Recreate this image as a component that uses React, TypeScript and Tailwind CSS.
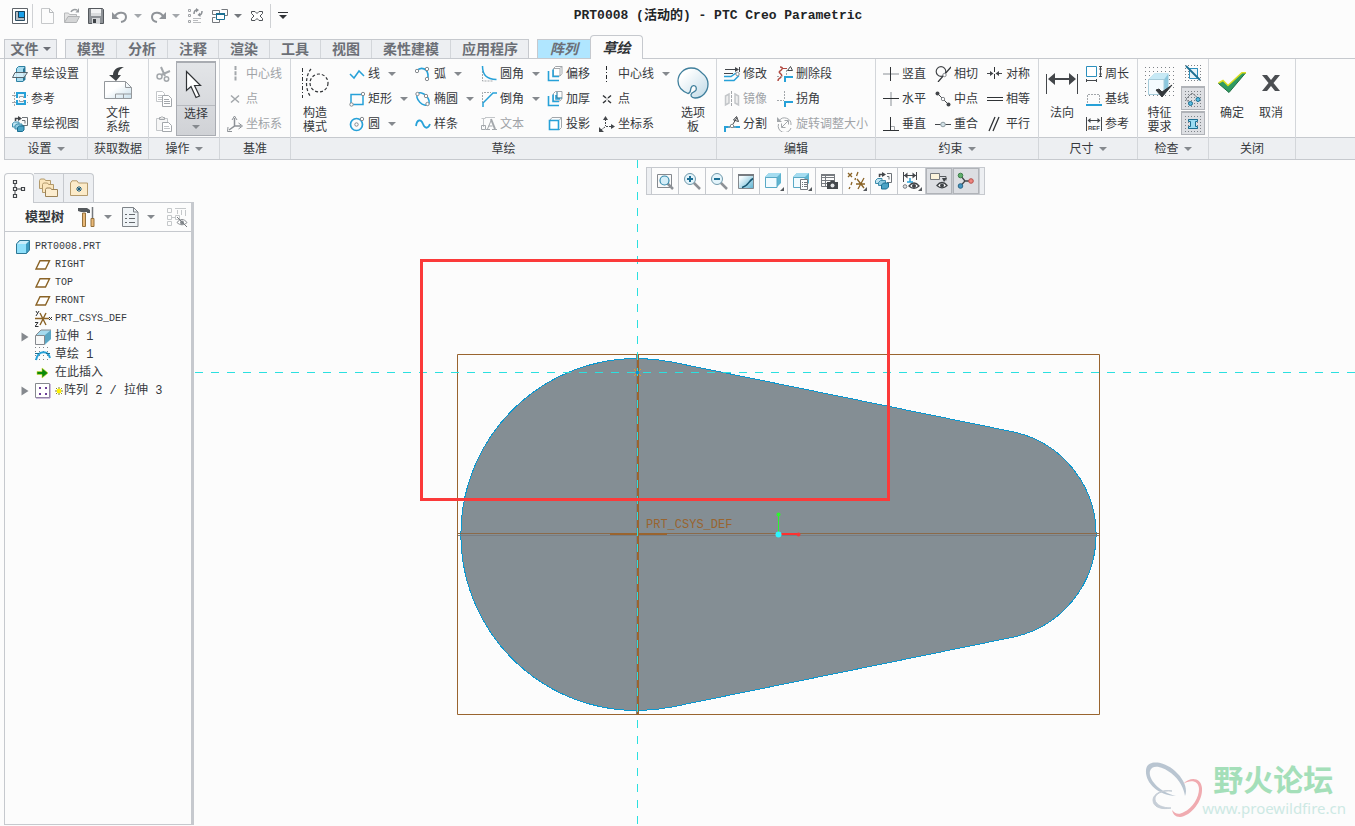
import type { ReactNode } from "react";

/* ---------- icon helpers ---------- */

function Svg({
  w = 16,
  h = 16,
  children,
}: {
  w?: number;
  h?: number;
  children: ReactNode;
}) {
  return (
    <svg
      width={w}
      height={h}
      viewBox={`0 0 ${w} ${h}`}
      fill="none"
      className="shrink-0"
      aria-hidden="true"
    >
      {children}
    </svg>
  );
}

function Caret({ color = "#85898e" }: { color?: string }) {
  return (
    <Svg w={8} h={4}>
      <path d="M0 0h8L4 4z" fill={color} />
    </Svg>
  );
}

const BLUE = "#27a1d8";
const TEAL = "#1b6f92";
const DARK = "#43464a";
const GRAY = "#a3a7ab";
const LIGHT = "#c3c6c9";
const BROWN = "#8a6326";

function Knob({ x, y }: { x: number; y: number }) {
  return <circle cx={x} cy={y} r="1.7" fill="#fff" stroke="#85898e" />;
}

/* ---------- quick access toolbar ---------- */

const appIcon = (
  <Svg>
    <path d="M.5 .5h15v15H.5z" fill="#fff" stroke="#5f646a" />
    <path d="M3.500 3.500h9v9h-9z" fill="#b5bdc4" stroke="#2d4e63" />
    <path d="M6.500 3.500h6v6h-6z" fill="#1aa0ea" stroke="#17405a" />
  </Svg>
);
const newIcon = (
  <Svg>
    <path d="M1.500 .5h8l4 4v11h-12z" fill="#fcfcfc" stroke="#c6c8ca" />
    <path d="M9.500 .5v4h4" stroke="#b5b8bb" />
  </Svg>
);
const openIcon = (
  <Svg>
    <path d="M.5 14V5h4l1 1.500h7V9" fill="#e4e4e4" stroke="#b7b9bb" />
    <path d="M.5 14.500L4 8.500h11.500l-3 6z" fill="#d4d5d6" stroke="#b0b2b4" />
    <path d="M7 4c1-2.500 4-3 6-2" stroke="#999da1" strokeWidth="1.500" />
    <path d="M11.500 4.500L15 4.500V0z" fill="#999da1" />
  </Svg>
);
const saveIcon = (
  <Svg>
    <path d="M.5 .5h14l1 1v14H.5z" fill="#8d9196" stroke="#54585d" />
    <path d="M3 1h10v7H3z" fill="#f2f3f4" />
    <path d="M3 5h10v3H3z" fill="#dadcde" />
    <path d="M4 10h8v6H4z" fill="#d5d7da" />
    <path d="M5 11h3v4H5z" fill="#3d4145" />
  </Svg>
);
const undoIcon = (
  <Svg>
    <path d="M3 8C6 3 14 4 14 9c0 3-2 4.500-5 5" stroke="#8f9398" strokeWidth="2" />
    <path d="M0 4v7h7z" fill="#8f9398" />
  </Svg>
);
const redoIcon = (
  <Svg>
    <path d="M13 8C10 3 2 4 2 9c0 3 2 4.500 5 5" stroke="#8f9398" strokeWidth="2" />
    <path d="M16 4v7H9z" fill="#8f9398" />
  </Svg>
);
const regenIcon = (
  <Svg>
    <path
      d="M.5 1.500h2v2h-2zM.5 6.500h2v2h-2zM.5 12.500h2v2h-2z"
      stroke="#a0a3a7"
    />
    <path d="M5 10.500h8M5 14.500h8M5 12.500h5" stroke="#b9bbbe" />
    <path d="M6 6c0-3 1-4 3-4M14 3c0 3-1 4-3 4" stroke="#8b8f94" strokeWidth="1.500" />
    <path d="M8 0l3 2-3 2.500zM12 4.500L9.500 7l3 2z" fill="#8b8f94" />
  </Svg>
);
const windowsIcon = (
  <Svg>
    <path d="M.5 2.500h7v4M.5 2.500v4h4M9.500 1.500h6v6h-3M.5 9.500h3M.5 9.500v5h7v-3" stroke="#74787d" />
    <path d="M4.500 5.500h8v6h-8z" fill="#fff" stroke={TEAL} />
    <path d="M4 5h9v2H4z" fill={TEAL} />
  </Svg>
);
const closeWinIcon = (
  <Svg w={12} h={12}>
    <path
      d="M.5 1.500H4L6 3.500l2-2h3.500v2L9 6l2.500 2.500v2H8l-2-2-2 2H.5v-2L3 6 .5 3.500z"
      fill="#fff"
      stroke="#4e5257"
    />
  </Svg>
);

/* ---------- ribbon icons ---------- */

const sketchSetup = (
  <Svg>
    <path d="M4.500 2.500l2-2h6.500v13l-2 2H4.500z" fill="#a9dcef" stroke="#2f82a4" />
    <path d="M11 3l2-2v12.500l-2 2z" fill="#2a7595" />
    <path d="M3 6.500h12.500l-3.500 5H.5z" fill="#d9f1fa" fillOpacity=".85" stroke="#58646c" />
  </Svg>
);
const references = (
  <Svg>
    <path d="M0 4.500h16M0 11.500h16M2.500 1v14" stroke={GRAY} strokeDasharray="2 1" />
    <path d="M5 2h8v11H5z" fill="#e8f6fc" stroke={BLUE} strokeWidth="2" />
    <path d="M7.500 5.500h4v5h-4z" fill="#fff" stroke="#9a9fa4" />
    <path d="M4 7h10v2H4z" fill="#fcfcfc" />
  </Svg>
);
const sketchView = (
  <Svg>
    <path d="M10 1.500h5.500v8H10M10 4.500h3v3" stroke="#6d7277" />
    <path d="M3.500 5V2.500h4" stroke={DARK} strokeWidth="1.500" />
    <path d="M6 0l4 2.500L6 5z" fill={DARK} />
    <path d="M.5 7.500l2-1.500H7v5H.5z" fill="#bfe4f2" stroke="#3e8dac" />
    <path d="M3 9.500L5 8h5v5H3z" fill="#8cc9e0" stroke="#3e8dac" />
    <path d="M5.500 11.500l2-1.500h4.500v4l-1.500 1.500h-5z" fill="#4ba3c5" stroke={TEAL} />
  </Svg>
);
const fileSystem = (
  <Svg w={28} h={32}>
    <defs>
      <linearGradient id="sheet" x1="0" y1="0" x2="1" y2="1">
        <stop offset=".4" stopColor="#fff" />
        <stop offset="1" stopColor="#c9dfeb" />
      </linearGradient>
    </defs>
    <path d="M20 0c-7-.5-11 3-11 8H5l7 6 5-6h-3c0-3 1.500-6 6-8z" fill="#3c4043" />
    <path d="M.5 14.500h21l6 6v11H.5z" fill="url(#sheet)" stroke="#94989c" />
    <path d="M21.500 14.500v6h6M11.500 31v-4h16M19.500 27v4" stroke="#94989c" />
  </Svg>
);
const cutIcon = (
  <Svg>
    <path d="M5 1l4 9M14 5L5 9" stroke={GRAY} strokeWidth="2" />
    <circle cx="3.500" cy="10.500" r="2.500" stroke={GRAY} strokeWidth="1.500" />
    <circle cx="10.500" cy="13" r="2.200" stroke={GRAY} strokeWidth="1.500" />
  </Svg>
);
const copyIcon = (
  <Svg>
    <path d="M.5 .5h6l2 2v8h-8z" fill="#fff" stroke={LIGHT} />
    <path d="M2 4.500h4M2 6.500h4M2 8.500h4" stroke={LIGHT} />
    <path d="M6.500 4.500h6l3 3v8h-9z" fill="#fff" stroke={GRAY} />
    <path d="M8 8.500h5M8 10.500h6M8 12.500h6" stroke={GRAY} />
  </Svg>
);
const pasteIcon = (
  <Svg>
    <path d="M.5 2.500h11v12H.5z" fill="#f6f6f6" stroke={LIGHT} />
    <path d="M3.500 3.500v-2h1.500L6 .5l1 1h1.500v2z" fill="#e5e5e5" stroke={GRAY} />
    <path d="M6.500 6.500h6l3 3v6h-9z" fill="#fff" stroke={GRAY} />
    <path d="M8 10.500h5M8 12.500h6" stroke={LIGHT} />
  </Svg>
);
const selectIcon = (
  <Svg w={18} h={29}>
    <path
      d="M2.500 1.500v19l4.500-4 5 11 3.500-1.500-5-10.500h6z"
      fill="#fff"
      stroke="#303336"
      strokeWidth="1.200"
    />
  </Svg>
);
const datumLine = (
  <Svg>
    <path d="M8.500 0v16" stroke={GRAY} strokeWidth="2" strokeDasharray="4 1.300" />
  </Svg>
);
const datumPoint = (
  <Svg>
    <path d="M4 4.500l8 7M12 4.500l-8 7" stroke={GRAY} strokeWidth="1.500" />
  </Svg>
);
const datumCsys = (
  <Svg>
    <path d="M7.500 2v8L2 14M7.500 10H14" stroke="#8d9196" strokeWidth="1.500" />
    <path d="M5 4l2.500-4L10 4M11.500 7l4 3-4 3M1 11l-.5 4.500H5" stroke="#8d9196" />
  </Svg>
);
const constructMode = (
  <Svg w={28} h={30}>
    <path d="M1.500 0v30" stroke="#303336" strokeDasharray="4 2 1 2" />
    <path d="M10 1c-6 7-6 21 0 28" stroke="#303336" strokeDasharray="3 2" strokeWidth="1.200" />
    <circle cx="18" cy="15" r="9" stroke="#303336" strokeDasharray="3 2" strokeWidth="1.200" />
  </Svg>
);
const lineIcon = (
  <Svg>
    <path d="M1 8l4 4 5-7 5 5" stroke={BLUE} strokeWidth="1.500" />
  </Svg>
);
const rectIcon = (
  <Svg>
    <path d="M2 3.500h12v10H2z" stroke={BLUE} strokeWidth="1.500" />
    <Knob x={2.5} y={13.5} />
    <Knob x={14} y={3} />
  </Svg>
);
const circleIcon = (
  <Svg>
    <circle cx="7.500" cy="8.500" r="6" stroke={BLUE} strokeWidth="1.700" />
    <Knob x={7.5} y={8.5} />
    <Knob x={13} y={3} />
  </Svg>
);
const arcIcon = (
  <Svg>
    <path d="M2 5C5 1 14 1 13 12" stroke={BLUE} strokeWidth="1.700" />
    <Knob x={2} y={5} />
    <Knob x={12} y={3} />
    <Knob x={12} y={13} />
  </Svg>
);
const ellipseIcon = (
  <Svg>
    <ellipse
      cx="8"
      cy="8"
      rx="7.500"
      ry="4.500"
      transform="rotate(45 8 8)"
      stroke={BLUE}
      strokeWidth="1.500"
    />
    <Knob x={2.5} y={3} />
    <Knob x={12.5} y={13} />
    <Knob x={11} y={5} />
  </Svg>
);
const splineIcon = (
  <Svg>
    <path d="M1 10c1-7 5-7 7-2s5 5 7 0" stroke={BLUE} strokeWidth="1.800" />
  </Svg>
);
const filletIcon = (
  <Svg>
    <path d="M1.500 5v10H12" stroke={GRAY} strokeDasharray="2 1" />
    <path d="M1.500 0c0 9 4 13 14 13.500" stroke={BLUE} strokeWidth="1.500" />
  </Svg>
);
const chamferIcon = (
  <Svg>
    <path d="M1.500 12V1.500H10" stroke={GRAY} strokeDasharray="2 1" />
    <path d="M2 16v-4L12 2h4" stroke={BLUE} strokeWidth="1.500" />
  </Svg>
);
const textIcon = (
  <Svg>
    <path d="M2.500 2v9M4 1.500h10M.5 2.500h4" stroke={LIGHT} />
    <path d="M.5 9.500h4v4h-4z" stroke={GRAY} />
    <path d="M5 13.500h4M11 13.500h5M6.500 13l4-9.500M7.500 10h4" stroke={GRAY} />
    <path d="M10 3l4 10" stroke={GRAY} strokeWidth="2" />
  </Svg>
);
const offsetIcon = (
  <Svg>
    <path d="M6.500 2.500l2-2h6.500v7l-2 2.500H6.500zM6.500 2.500H13V10M13 2.500l2-2" fill="#fff" stroke={GRAY} />
    <path d="M6 3.500v7h6M1.500 5v9.500H12" stroke={BLUE} strokeWidth="1.600" />
  </Svg>
);
const thickenIcon = (
  <Svg>
    <path d="M6.500 2.500l2-2h6.500v7l-2 2.500H6.500z" fill="#fff" stroke={GRAY} />
    <path d="M6 3.500v7h6M1.500 5v9.500H12M9 4v4h4" stroke={BLUE} strokeWidth="1.600" />
    <path d="M10 1v6h5" stroke={TEAL} />
  </Svg>
);
const projectIcon = (
  <Svg>
    <path d="M3 4L5 1.500h9.500v10L12 14M12.500 4l2-2.500" stroke={GRAY} />
    <path d="M2.500 4.500h9v9h-9z" fill="#fff" stroke={BLUE} strokeWidth="1.600" />
  </Svg>
);
const centerlineIcon = (
  <Svg>
    <path d="M7.500 0v16" stroke="#26292c" strokeDasharray="4 2 1 2" />
  </Svg>
);
const pointIcon = (
  <Svg>
    <path d="M4 4.500l3 2.500M12 4.500L9 7M4 12l3-2.500M12 12L9 9.500" stroke="#303336" strokeWidth="1.500" />
    <path d="M7.500 7.500h1v1h-1z" fill="#303336" />
  </Svg>
);
const csysIcon = (
  <Svg>
    <path d="M6.500 3v7M7 10.500h6M6 11l-4 3" stroke={DARK} strokeDasharray="2 1" />
    <path d="M4 4l2.500-4L9 4zM12 8l4 2.500-4 2.500zM0 11v5h5z" fill={DARK} />
  </Svg>
);
const paletteIcon = (
  <Svg w={32} h={32}>
    <defs>
      <linearGradient id="pal" x1="0" y1="0" x2="1" y2="1">
        <stop offset=".2" stopColor="#fff" />
        <stop offset="1" stopColor="#bfd9e6" />
      </linearGradient>
    </defs>
    <path
      d="M11 26.500C5 24 1 20 1 14 1 7 7 1 14 1c6 0 8 2 11 5 4 3 6 6 6 11 0 8-6 14-13 14-4 0-5-3-3-5 4-2 5-3 4-6-1-2-4-2-5 1-1 3 0 5-3 5.500z"
      fill="url(#pal)"
      stroke="#3f7f9c"
      strokeWidth="1.300"
    />
  </Svg>
);

const modifyIcon = (
  <Svg>
    <path d="M1 3.500h11M0 7.500h9" stroke={DARK} />
    <path d="M11 1l4 2.500L11 6z" fill={DARK} />
    <path d="M15.500 1v5" stroke={DARK} />
    <path d="M0 10.500h7l5-3.500M0 14.500h10l5-5" stroke={BLUE} strokeWidth="1.500" />
    <Knob x={13.5} y={8} />
  </Svg>
);
const mirrorIcon = (
  <Svg>
    <path d="M1.500 5L5 3v9l-3.500 2zM11 3l3.500 2v9L11 12z" fill="#eee" stroke={LIGHT} strokeWidth="1.500" />
    <path d="M7.500 0v16" stroke={GRAY} strokeDasharray="3 1" />
  </Svg>
);
const divideIcon = (
  <Svg>
    <path d="M1 16v-5h5M9 11h7" stroke={BLUE} strokeWidth="2" />
    <path d="M4 11h8" stroke={GRAY} />
    <path d="M13 1.500L9 8M9.500 4l3-3.500 2 5z" fill="#fff" stroke={DARK} />
    <Knob x={8} y={10} />
  </Svg>
);
const deleteSegIcon = (
  <Svg>
    <path d="M3 1c4 0 2 3 0 4-3 2 4 3 1 6-1 2-3 1-3 4" stroke="#b04a42" strokeWidth="1.500" />
    <path d="M5 2.500h5" stroke="#b04a42" />
    <path d="M10.500 4.500l3-4 2 4z" fill="#fff" stroke={DARK} />
    <path d="M0 10.500h6M9.500 4v5" stroke={GRAY} strokeDasharray="2 1" />
    <path d="M8 16v-5h8" stroke={BLUE} strokeWidth="2" />
  </Svg>
);
const cornerIcon = (
  <Svg>
    <path d="M0 9.500h7M7.500 0v9" stroke={GRAY} strokeDasharray="2 1" />
    <path d="M8 16v-5h8" stroke={BLUE} strokeWidth="2" />
  </Svg>
);
const rotateIcon = (
  <Svg>
    <path d="M2 5a6.500 6.500 0 0 1 12 4M14 12A6.500 6.500 0 0 1 1.500 8" stroke={GRAY} />
    <path d="M5 11l6-6M7.500 4.500h4v4M4.500 7.500v4h4" stroke={GRAY} />
    <path d="M0 1v5h5z" fill={GRAY} />
  </Svg>
);

const verticalIcon = (
  <Svg>
    <path d="M0 8h16" stroke={LIGHT} strokeWidth="2" />
    <path d="M7.500 1v14" stroke="#303336" />
  </Svg>
);
const horizontalIcon = (
  <Svg>
    <path d="M8 1v14" stroke={LIGHT} strokeWidth="2" />
    <path d="M0 7.500h16" stroke="#303336" />
  </Svg>
);
const perpendicularIcon = (
  <Svg>
    <path d="M8 10.500h3.500V14" stroke={GRAY} />
    <path d="M7.500 1v13M0 14.500h16" stroke="#303336" />
  </Svg>
);
const tangentIcon = (
  <Svg>
    <circle cx="6" cy="5.500" r="4.800" stroke={DARK} strokeWidth="1.200" />
    <path d="M3 16L16 1" stroke="#303336" strokeWidth="1.200" />
    <Knob x={9.5} y={9} />
  </Svg>
);
const midpointIcon = (
  <Svg>
    <path d="M2 2l12 12" stroke={DARK} />
    <circle cx="2.500" cy="2.500" r="2" fill={DARK} />
    <circle cx="13.500" cy="13.500" r="2" fill={DARK} />
    <Knob x={8} y={8} />
  </Svg>
);
const coincidentIcon = (
  <Svg>
    <path d="M0 8.500h16" stroke={DARK} />
    <circle cx="8" cy="8.500" r="2.300" fill="#d0dfe5" stroke="#8f9ca2" />
  </Svg>
);
const symmetricIcon = (
  <Svg>
    <path d="M7.500 1v14" stroke="#303336" strokeDasharray="5 2" />
    <path d="M0 7.500h5M10 7.500h5" stroke={DARK} />
    <path d="M3 5l3.500 2.500L3 10zM12 5L8.500 7.500 12 10z" fill={DARK} />
  </Svg>
);
const equalIcon = (
  <Svg>
    <path d="M0 6.500h16M0 9.500h16" stroke="#303336" />
  </Svg>
);
const parallelIcon = (
  <Svg>
    <path d="M2 15L8 1M6 15l6-14" stroke="#303336" strokeWidth="1.300" />
  </Svg>
);

const normalDim = (
  <Svg w={32} h={24}>
    <path d="M.5 3v20M31.500 3v20" stroke={DARK} />
    <path d="M5 8h22" stroke={DARK} strokeWidth="2" />
    <path d="M2 8l7-6v12zM30 8l-7-6v12z" fill={DARK} />
  </Svg>
);
const perimeterIcon = (
  <Svg>
    <path d="M.5 .5h10v10H.5z" fill="#fff" stroke="#2b8fbd" />
    <path d="M13 .5h3M13 10.500h3M14.500 1v9M.5 13v3M10.500 13v3M1 14.500h9" stroke={DARK} />
    <path d="M13 3.500L14.500 1 16 3.500zM13 7.500l1.500 2.500L16 7.500z" fill={DARK} />
  </Svg>
);
const baselineIcon = (
  <Svg>
    <path d="M1.500 12V3.500h12V12" stroke={GRAY} strokeDasharray="2 1" />
    <path d="M0 14h16" stroke={BLUE} strokeWidth="2" />
  </Svg>
);
const refDimIcon = (
  <Svg>
    <path d="M.5 1v14M15.500 1v14M2 4.500h12" stroke={DARK} />
    <path d="M1.500 4.500l3-2.500v5zM14.500 4.500l-3-2.500v5z" fill={DARK} />
    <text x="2" y="14" fontSize="6" fontWeight="700" fontFamily="Liberation Sans, sans-serif" fill={DARK}>
      REF
    </text>
  </Svg>
);

function DotGrid({ w, h, step = 4 }: { w: number; h: number; step?: number }) {
  const dots = [];
  for (let y = 0; y < h; y += step)
    for (let x = 0; x < w; x += step)
      dots.push(<rect key={`${x}-${y}`} x={x} y={y} width="1" height="1" fill="#7d8287" />);
  return <>{dots}</>;
}

const featureReq = (
  <Svg w={30} h={32}>
    <DotGrid w={30} h={31} />
    <path d="M3.500 12.500l6-6h14v15l-4 6h-16z" fill="#8dc8de" />
    <path d="M3.500 12.500l6-6h14l-4.500 6z" fill="#c7e9f5" />
    <path d="M3.500 12.500H19v15H3.500z" fill="#f4fbfe" stroke="#a6cbd9" />
    <path d="M11 23l3-1 3 3 10-7-10 12z" fill="#35393c" stroke="#35393c" />
  </Svg>
);
const overlapIcon = (
  <Svg>
    <DotGrid w={16} h={16} step={3} />
    <path d="M4.500 3.500h8v10h-8z" fill="#e6f4fa" stroke="#2b8fbd" />
    <path d="M1 1l14 14" stroke={TEAL} strokeWidth="1.800" />
  </Svg>
);
const openEndsIcon = (
  <Svg>
    <DotGrid w={16} h={16} step={3} />
    <path d="M1 8l6-6 6 5M1 8l4 5" stroke="#84898e" />
    <circle cx="5.500" cy="12.500" r="2" fill="#5bbce0" stroke={TEAL} />
    <circle cx="13" cy="8.500" r="2" fill="#5bbce0" stroke={TEAL} />
  </Svg>
);
const shadeLoopsIcon = (
  <Svg>
    <DotGrid w={16} h={16} step={3} />
    <path d="M3.500 3.500h9v2h-2v5h2v2h-9v-2h2v-5h-2z" fill="#9bdcf2" stroke={TEAL} />
  </Svg>
);
const okIcon = (
  <Svg w={28} h={22}>
    <path d="M.5 11.500L5 9l5 5L24 1h3.500L11 20.500z" fill="#2f9b62" stroke="#1f6d43" />
    <path d="M.5 11L5 8.500l5 5L24 .7h4" stroke="#d9e021" strokeWidth="1.500" />
  </Svg>
);
const cancelIcon = (
  <Svg w={20} h={18}>
    <path d="M1 1h5l4 5 4-5h5l-6.500 8 6.500 8h-5l-4-5-4 5H1l6.500-8z" fill="#4b4e52" />
  </Svg>
);

/* ---------- graphics toolbar ---------- */

const cubeBody = (
  <>
    <path d="M1 6l4-4h12v10l-4 4H1z" fill="#5fb4d0" />
    <path d="M1 6l4-4h12l-4 4z" fill="#a5dcf0" />
    <path d="M1.500 6.500H13V16.500H1.500z" fill="#f2fbff" stroke="#59a9c6" />
  </>
);
const cornerMark = <path d="M20 16v4h-4z" fill="#55595d" />;

const refitIcon = (
  <Svg w={18} h={18}>
    <path d="M1.500 2.500h14v13h-14z" fill="#fafafa" stroke="#85898e" />
    <path d="M11 11l6 6" stroke="#8d9196" strokeWidth="2.500" />
    <circle cx="8.500" cy="8.500" r="4.500" fill="#d5eef8" stroke="#3489ab" strokeWidth="1.200" />
  </Svg>
);
const zoomInIcon = (
  <Svg w={18} h={18}>
    <path d="M10 10l7 7" stroke="#8d9196" strokeWidth="2.500" />
    <circle cx="7" cy="7" r="5.500" fill="#e3f4fb" stroke="#7199ab" />
    <path d="M4 7h6M7 4v6" stroke="#1c6e94" strokeWidth="2" />
  </Svg>
);
const zoomOutIcon = (
  <Svg w={18} h={18}>
    <path d="M10 10l7 7" stroke="#8d9196" strokeWidth="2.500" />
    <circle cx="7" cy="7" r="5.500" fill="#e3f4fb" stroke="#7199ab" />
    <path d="M4 7h6" stroke="#1c6e94" strokeWidth="2" />
  </Svg>
);
const repaintIcon = (
  <Svg w={18} h={18}>
    <defs>
      <linearGradient id="paint" x1="0" y1="0" x2="1" y2="1">
        <stop offset=".2" stopColor="#f4fbfe" />
        <stop offset="1" stopColor="#5bb2d1" />
      </linearGradient>
    </defs>
    <path d="M1.500 2.500h15v14h-15z" fill="url(#paint)" stroke="#85898e" />
    <path d="M1 2h16v2H1z" fill="#777b80" />
    <path d="M5 15.500c6-1 6-6 11-9" stroke="#175672" strokeWidth="1.500" />
  </Svg>
);
const displayStyleIcon = (
  <Svg w={20} h={20}>
    {cubeBody}
    {cornerMark}
  </Svg>
);
const savedViewsIcon = (
  <Svg w={20} h={20}>
    {cubeBody}
    <path d="M8.500 8.500h7v10h-7z" fill="#fff" stroke="#74787d" />
    <path d="M10 11.500h1M12 11.500h3M10 13.500h1M12 13.500h3M10 15.500h1M12 15.500h3" stroke="#74787d" />
    {cornerMark}
  </Svg>
);
const viewManagerIcon = (
  <Svg w={18} h={18}>
    <path d="M1.500 2.500h13v12h-13zM5.500 3v11M2 5.500h12M2 8.500h12M2 11.500h12" stroke="#777b80" />
    <path d="M1 2h14v2H1z" fill="#777b80" />
    <path d="M7 10h3l1-1.500h3l1 1.500h3v7H7z" fill="#44484c" />
    <circle cx="12.500" cy="13.500" r="2" fill="#e5e7e9" />
  </Svg>
);
const datumDisplayIcon = (
  <Svg w={20} h={20}>
    <path
      d="M1 2l4 4M5 2L1 6M11 1L9.500 5M8.500 7L8 9M5 11l-1 3M3 16l-1 2M10 8l7 9M17 7l-6 11M9 13h9"
      stroke={BROWN}
      strokeWidth="1.300"
    />
    {cornerMark}
  </Svg>
);
const sketchViewIcon = (
  <Svg w={18} h={18}>
    <path d="M12 1.500h4.500v9H12M12 4.500h2v3" stroke="#6d7277" />
    <path d="M4.500 5V2.500h4" stroke={DARK} strokeWidth="1.500" />
    <path d="M7 0l4 2.500L7 5z" fill={DARK} />
    <path d="M.5 8.500l2-2H7v5H.5z" fill="#bfe4f2" stroke="#3e8dac" />
    <path d="M3.500 10.500l2-2h5v5h-7z" fill="#8cc9e0" stroke="#3e8dac" />
    <path d="M6.500 13l2-2h5v4l-2 2h-5z" fill="#4ba3c5" stroke={TEAL} />
  </Svg>
);
const sketchDisplayIcon = (
  <Svg w={20} h={20}>
    <path d="M1.500 1v10M14.500 1v8M2 4.500h12" stroke={DARK} />
    <path d="M2 4.500l3.500-3v6zM14 4.500l-3.500-3v6z" fill={DARK} />
    <path d="M8 7v4M5 11h6" stroke={BLUE} strokeWidth="1.500" />
    <circle cx="3" cy="15.500" r="1.800" fill="#dfe2e4" stroke="#777b80" />
    <path d="M7 15c3-4 7-4 10 0-3 3-7 3-10 0z" fill="#fff" stroke="#3f4347" strokeWidth="1.300" />
    <circle cx="12" cy="15" r="2" fill="#3f4347" />
    {cornerMark}
  </Svg>
);
const annotationIcon = (
  <Svg w={18} h={18}>
    <path d="M.5 1.500h9v6h-9z" fill="#fbf3dc" stroke="#76797d" />
    <path d="M10 4.500h6v4" stroke="#55595d" />
    <path d="M12 6h5l-3 4z" fill="#3f4347" />
    <path d="M7 13.500c3-4 7-4 10 0-3 3-7 3-10 0z" fill="#fff" stroke="#3f4347" strokeWidth="1.300" />
    <circle cx="12" cy="13.500" r="2" fill="#3f4347" />
  </Svg>
);
const spinCenterIcon = (
  <Svg w={18} h={18}>
    <path d="M3.500 3.500L8 9l-4.500 5M8 9h6" stroke={DARK} strokeWidth="1.300" />
    <circle cx="3.500" cy="3.500" r="2.300" fill="#5fae6b" stroke="#3f7f4b" />
    <circle cx="3.500" cy="14" r="2.300" fill="#4496c3" stroke="#2b6686" />
    <circle cx="14" cy="9" r="2.300" fill="#ee8680" stroke="#b6504b" />
  </Svg>
);

/* ---------- model tree icons ---------- */

const treeTabIcon = (
  <Svg w={14} h={20}>
    <path d="M1.500 1.500h3v3h-3zM1.500 8.500h3v3h-3zM1.500 15.500h3v3h-3zM9.500 8.500h3v3h-3z" stroke={DARK} strokeWidth="1.200" />
    <path d="M3 5v3M3 12v3M5 10h4" stroke={DARK} />
  </Svg>
);
const foldersIcon = (
  <Svg w={20} h={20}>
    <path d="M.5 2.500l1-1.500h4l1 1.500h5v8H.5z" fill="#fbe6bd" stroke="#b39a6c" />
    <path d="M3.500 6.500l1-1.500h4l1 1.500h5v8h-11z" fill="#fbe6bd" stroke="#b39a6c" />
    <path d="M6.500 11.500l1-1.500h4l1 1.500h6v7h-12z" fill="#fcedd0" stroke="#9c8358" />
  </Svg>
);
const favoritesIcon = (
  <Svg w={18} h={16}>
    <path d="M.5 3L2 .8h5L8.500 3h9v12.500H.5z" fill="#fcebc9" stroke="#b49a6c" />
    <path d="M9 6v6M6 9h6M7 7l4 4M11 7l-4 4" stroke="#1b5b7c" />
  </Svg>
);
const hammerIcon = (
  <Svg w={18} h={20}>
    <path d="M0 1h9l3 2v3H9V5H3L0 4z" fill="#55595d" />
    <path d="M4.500 6h3v13.500h-3z" fill="#e9b877" stroke="#94703c" />
    <path d="M14.500 0v11" stroke="#74787d" strokeWidth="1.500" />
    <path d="M13 11.500h3v8h-3z" fill="#e9b877" stroke="#94703c" />
  </Svg>
);
const treeListIcon = (
  <Svg w={17} h={20}>
    <path d="M.5 .5h11l4.500 4.500v14.500H.5z" fill="#f0f4f7" stroke="#7e8388" />
    <path d="M11.500 .5v4.500h4.500" stroke="#7e8388" />
    <path d="M3 7.500h2M7 7.500h6M3 11.500h2M7 11.500h6M3 15.500h2M7 15.500h6" stroke="#65696e" />
  </Svg>
);
const treeHideIcon = (
  <Svg w={21} h={20}>
    <path d="M.5 1.500h4v4h-4zM.5 8.500h4v4h-4zM.5 14.500h4v4h-4zM8.500 8.500h4v4h-4z" stroke="#c5c8ca" />
    <path d="M8 1.500h11M10.500 3v4M14.500 3v5M18.500 3v6M5 10.500h3" stroke="#c5c8ca" />
    <path d="M10 15.500c3-4 7-4 10 0-3 3-7 3-10 0z" fill="#fff" stroke="#888c90" />
    <circle cx="15" cy="15.500" r="2" fill="#888c90" />
    <path d="M10 10l10 10" stroke="#777b80" />
  </Svg>
);

const partIcon = (
  <Svg w={14} h={14}>
    <path d="M.5 4l3-3.500h10V10l-3 3.500H.5z" fill="#3d9cc0" stroke="#2d7795" />
    <path d="M1 4l3-3h9l-3 3z" fill="#c9edfa" />
    <path d="M1 4h9v9H1z" fill="#8fe0fb" />
  </Svg>
);
const planeIcon = (
  <Svg>
    <path d="M5 3.700h9.500L10.500 12H1z" fill="#fff" stroke={BROWN} strokeWidth="1.400" />
  </Svg>
);
const treeCsysIcon = (
  <Svg w={18} h={18}>
    <path d="M0 8.500h14M5 3l6 12M11 3L5 15" stroke={BROWN} strokeWidth="1.400" />
    <path d="M1 1l1.500 2.500M4 1L1 6M0 12.500h3L0 16.500h3.500M14 7l3 3M17 7l-3 3" stroke="#303336" />
  </Svg>
);
const extrudeIcon = (
  <Svg>
    <path d="M1 6l5-5h10v9l-6 6z" fill="#a6daee" />
    <path d="M10 6l6-5v9l-6 5z" fill="#5aa6c3" />
    <path d="M.5 6.500h9v9h-9z" fill="#f7f7f7" stroke="#85898e" />
    <path d="M1 6l5-5h10" stroke="#85898e" />
  </Svg>
);
const treeSketchIcon = (
  <Svg>
    <DotGrid w={16} h={16} />
    <path d="M1 13C3 3 13 3 15 11" stroke={BLUE} strokeWidth="2" />
    <path d="M0 6.500h4M11 6.500h4" stroke={TEAL} />
  </Svg>
);
const insertIcon = (
  <Svg w={14} h={14}>
    <path d="M2 5.500h5V2l6 5-6 5V8.500H2z" fill="#0a8a0a" stroke="#d7d82b" strokeWidth=".6" />
  </Svg>
);
const patternIcon = (
  <Svg>
    <path d="M.5 .5h14v14H.5z" fill="#fff" stroke="#85898e" />
    <path d="M15 1v14H1" stroke="#9a7bb8" />
    <path d="M4 4h2v2H4zM10 4h2v2h-2zM4 10h2v2H4zM10 10h2v2h-2z" fill="#6d3f99" />
  </Svg>
);
const sparkIcon = (
  <Svg w={9} h={8}>
    <path d="M4 0v8M0 4h8M1 1l6 6M7 1L1 7" stroke="#8a8d1c" />
    <path d="M2 2h4v4H2z" fill="#fff200" />
  </Svg>
);

/* ---------- ribbon building blocks ---------- */

type Cmd = { icon: ReactNode; label: string; menu?: boolean; off?: boolean };

function SmallCommand({ icon, label, menu, off }: Cmd) {
  return (
    <button
      disabled={off}
      className={`flex h-[25px] items-center whitespace-nowrap ${off ? "text-[#a0a3a7]" : ""}`}
    >
      {icon}
      <span className="ml-[3px]">{label}</span>
      {menu && (
        <span className="ml-2">
          <Caret />
        </span>
      )}
    </button>
  );
}

function Column({ items, className = "" }: { items: Cmd[]; className?: string }) {
  return (
    <div className={`flex shrink-0 flex-col items-start ${className}`}>
      {items.map((item) => (
        <SmallCommand key={item.label} {...item} />
      ))}
    </div>
  );
}

function BigCommand({ icon, lines, className = "" }: { icon: ReactNode; lines: string[]; className?: string }) {
  return (
    <button className={`flex shrink-0 flex-col items-center ${className}`}>
      <span className="mt-[2px] flex h-10 items-center">{icon}</span>
      <span className="mt-[3px] leading-[14px]">
        {lines.map((line) => (
          <span key={line} className="block">
            {line}
          </span>
        ))}
      </span>
    </button>
  );
}

function Group({
  title,
  menu,
  className,
  children,
}: {
  title: string;
  menu?: boolean;
  className: string;
  children?: ReactNode;
}) {
  return (
    <section className={`flex flex-col border-r border-[#d3d6da] ${className}`}>
      <div className="flex h-[78px] pt-[2px]">{children}</div>
      <h3 className="flex h-[22px] items-center justify-center gap-[5px] border-t border-[#c6c9ce] bg-[#edeff2]">
        {title}
        {menu && <Caret />}
      </h3>
    </section>
  );
}

const tabs = ["模型", "分析", "注释", "渲染", "工具", "视图", "柔性建模", "应用程序"];

const viewButtons = [
  { label: "重新调整", icon: refitIcon },
  { label: "放大", icon: zoomInIcon },
  { label: "缩小", icon: zoomOutIcon },
  { label: "重画", icon: repaintIcon },
  { label: "显示样式", icon: displayStyleIcon, menu: true },
  { label: "已保存方向", icon: savedViewsIcon, menu: true },
  { label: "视图管理器", icon: viewManagerIcon },
  { label: "基准显示过滤器", icon: datumDisplayIcon, menu: true },
  { label: "草绘视图", icon: sketchViewIcon },
  { label: "草绘器显示过滤器", icon: sketchDisplayIcon, menu: true },
  { label: "注释显示", icon: annotationIcon, on: true },
  { label: "旋转中心", icon: spinCenterIcon, on: true },
];

const treeItems = [
  { label: "RIGHT", icon: planeIcon },
  { label: "TOP", icon: planeIcon },
  { label: "FRONT", icon: planeIcon },
  { label: "PRT_CSYS_DEF", icon: treeCsysIcon },
  { label: "拉伸 1", icon: extrudeIcon, cjk: true, open: true },
  { label: "草绘 1", icon: treeSketchIcon, cjk: true },
  { label: "在此插入", icon: insertIcon, cjk: true },
  { label: "阵列 2 / 拉伸 3", icon: patternIcon, cjk: true, open: true, spark: true },
];

function TitleBar() {
  return (
    <header className="flex h-8 shrink-0 items-center pl-3">
      <div className="flex items-center">
        {appIcon}
        <div className="mr-[7px] ml-1 h-6 w-px bg-[#cfd1d4]" />
        <div className="flex items-center gap-2">
          <button aria-label="新建">{newIcon}</button>
          <button aria-label="打开">{openIcon}</button>
          <button aria-label="保存">{saveIcon}</button>
          <button aria-label="撤消" className="flex items-center gap-[6px]">
            {undoIcon}
            <Caret color="#a3a7ab" />
          </button>
          <button aria-label="重做" className="flex items-center gap-[6px]">
            {redoIcon}
            <Caret color="#a3a7ab" />
          </button>
          <button aria-label="重新生成">{regenIcon}</button>
          <button aria-label="窗口" className="flex items-center gap-[6px]">
            {windowsIcon}
            <Caret color="#74787d" />
          </button>
          <button aria-label="关闭窗口" className="ml-px">
            {closeWinIcon}
          </button>
        </div>
        <div className="mx-[7px] h-6 w-px bg-[#cfd1d4]" />
        <button aria-label="自定义快速访问工具栏">
          <Svg w={10} h={8}>
            <path d="M0 .5h10" stroke="#303336" />
            <path d="M1 3h8L5 7z" fill="#303336" />
          </Svg>
        </button>
      </div>
      <h1 className="flex-1 pr-[207px] text-center font-['Liberation_Mono','Noto_Sans_CJK_SC',monospace] text-[13px] font-bold text-[#222426]">
        PRT0008 (活动的) - PTC Creo Parametric
      </h1>
    </header>
  );
}

function TabBar() {
  return (
    <nav className="flex h-[27px] shrink-0 items-end border-b border-[#c6c9ce] pl-1 text-sm font-bold text-[#6c6f76]">
      <button className="flex h-[19px] w-[53px] items-center justify-center gap-1 border border-b-0 border-[#c6c9ce] bg-[#edeff2]">
        文件
        <Caret color="#6c6f76" />
      </button>
      <div className="ml-2 flex h-[19px] border-t border-l border-[#c6c9ce] bg-[#edeff2]">
        {tabs.map((tab) => (
          <button
            key={tab}
            className="border-r border-[#d3d6da] px-[11px] leading-[18px] last:border-[#c6c9ce] last:pr-[10px]"
          >
            {tab}
          </button>
        ))}
      </div>
      <button className="ml-2 h-[19px] w-[53px] border-t border-l border-[#c6c9ce] bg-[#b0e6ff] leading-[18px] italic">
        阵列
      </button>
      <button className="-mb-px h-6 w-[53px] rounded-t-sm border border-b-0 border-[#c6c9ce] bg-[#fcfcfc] text-[#2f3235] italic">
        草绘
      </button>
    </nav>
  );
}

function Ribbon() {
  return (
    <div className="ml-1 flex shrink-0 border-b border-l border-[#c6c9ce] text-xs text-[#36393d]">
      <Group title="设置" menu className="w-[83px] shrink-0">
        <Column
          className="ml-[7px]"
          items={[
            { icon: sketchSetup, label: "草绘设置" },
            { icon: references, label: "参考" },
            { icon: sketchView, label: "草绘视图" },
          ]}
        />
      </Group>
      <Group title="获取数据" className="w-[61px] shrink-0">
        <BigCommand className="w-[60px]" icon={fileSystem} lines={["文件", "系统"]} />
      </Group>
      <Group title="操作" menu className="w-[71px] shrink-0">
        <div className="ml-[7px] flex flex-col">
          <button aria-label="剪切" disabled className="h-[25px]">{cutIcon}</button>
          <button aria-label="复制" disabled className="h-[25px]">{copyIcon}</button>
          <button aria-label="粘贴" disabled className="h-[25px]">{pasteIcon}</button>
        </div>
        <button className="ml-1 flex h-[75px] w-10 flex-col items-center border border-t-2 border-[#a9acb2] bg-linear-to-b from-[#e3e5e8] to-[#d0d2d6]">
          <span className="flex h-[43px] w-full items-center justify-center border-b border-[#b7babf] pr-[7px]">
            {selectIcon}
          </span>
          <span className="leading-4">选择</span>
          <span className="mt-[3px]">
            <Caret />
          </span>
        </button>
      </Group>
      <Group title="基准" className="w-[71px] shrink-0">
        <Column
          className="ml-[7px]"
          items={[
            { icon: datumLine, label: "中心线", off: true },
            { icon: datumPoint, label: "点", off: true },
            { icon: datumCsys, label: "坐标系", off: true },
          ]}
        />
      </Group>
      <Group title="草绘" className="w-[426px] shrink-0">
        <BigCommand className="w-12" icon={constructMode} lines={["构造", "模式"]} />
        <Column
          className="ml-[10px] w-[66px]"
          items={[
            { icon: lineIcon, label: "线", menu: true },
            { icon: rectIcon, label: "矩形", menu: true },
            { icon: circleIcon, label: "圆", menu: true },
          ]}
        />
        <Column
          className="w-[66px]"
          items={[
            { icon: arcIcon, label: "弧", menu: true },
            { icon: ellipseIcon, label: "椭圆", menu: true },
            { icon: splineIcon, label: "样条" },
          ]}
        />
        <Column
          className="w-[66px]"
          items={[
            { icon: filletIcon, label: "圆角", menu: true },
            { icon: chamferIcon, label: "倒角", menu: true },
            { icon: textIcon, label: "文本", off: true },
          ]}
        />
        <Column
          className="w-[52px]"
          items={[
            { icon: offsetIcon, label: "偏移" },
            { icon: thickenIcon, label: "加厚" },
            { icon: projectIcon, label: "投影" },
          ]}
        />
        <Column
          className="w-[76px]"
          items={[
            { icon: centerlineIcon, label: "中心线", menu: true },
            { icon: pointIcon, label: "点" },
            { icon: csysIcon, label: "坐标系" },
          ]}
        />
        <BigCommand className="w-[36px]" icon={paletteIcon} lines={["选项", "板"]} />
      </Group>
      <Group title="编辑" className="w-[159px] shrink-0">
        <Column
          className="ml-[7px] w-[53px]"
          items={[
            { icon: modifyIcon, label: "修改" },
            { icon: mirrorIcon, label: "镜像", off: true },
            { icon: divideIcon, label: "分割" },
          ]}
        />
        <Column
          items={[
            { icon: deleteSegIcon, label: "删除段" },
            { icon: cornerIcon, label: "拐角" },
            { icon: rotateIcon, label: "旋转调整大小", off: true },
          ]}
        />
      </Group>
      <Group title="约束" menu className="w-[163px] shrink-0">
        <Column
          className="ml-[7px] w-[52px]"
          items={[
            { icon: verticalIcon, label: "竖直" },
            { icon: horizontalIcon, label: "水平" },
            { icon: perpendicularIcon, label: "垂直" },
          ]}
        />
        <Column
          className="w-[52px]"
          items={[
            { icon: tangentIcon, label: "相切" },
            { icon: midpointIcon, label: "中点" },
            { icon: coincidentIcon, label: "重合" },
          ]}
        />
        <Column
          items={[
            { icon: symmetricIcon, label: "对称" },
            { icon: equalIcon, label: "相等" },
            { icon: parallelIcon, label: "平行" },
          ]}
        />
      </Group>
      <Group title="尺寸" menu className="w-[99px] shrink-0">
        <BigCommand className="w-[46px]" icon={normalDim} lines={["法向"]} />
        <Column
          className="ml-px"
          items={[
            { icon: perimeterIcon, label: "周长" },
            { icon: baselineIcon, label: "基线" },
            { icon: refDimIcon, label: "参考" },
          ]}
        />
      </Group>
      <Group title="检查" menu className="w-[71px] shrink-0">
        <BigCommand className="w-[43px]" icon={featureReq} lines={["特征", "要求"]} />
        <div className="flex flex-col gap-px">
          <button aria-label="重叠几何" className="flex h-6 w-6 items-center justify-center">
            {overlapIcon}
          </button>
          <button
            aria-label="突出显示开放端"
            className="flex h-6 w-6 items-center justify-center border border-t-2 border-[#b0b3b8] bg-[#dddfe3]"
          >
            {openEndsIcon}
          </button>
          <button
            aria-label="着色封闭环"
            className="flex h-6 w-6 items-center justify-center border border-t-2 border-[#b0b3b8] bg-[#dddfe3]"
          >
            {shadeLoopsIcon}
          </button>
        </div>
      </Group>
      <Group title="关闭" className="w-[87px] shrink-0">
        <BigCommand className="ml-[3px] w-10" icon={okIcon} lines={["确定"]} />
        <BigCommand className="w-[38px]" icon={cancelIcon} lines={["取消"]} />
      </Group>
      <div className="flex flex-1 flex-col">
        <div className="h-[78px]" />
        <div className="h-[22px] border-t border-[#c6c9ce] bg-[#edeff2]" />
      </div>
    </div>
  );
}

function ModelTree() {
  return (
    <aside className="flex w-[190px] shrink-0 flex-col pt-[13px] pb-px text-xs text-[#36393d]">
      <div className="flex h-[29px] items-stretch">
        <button
          aria-label="模型树"
          className="relative -mb-px flex w-[30px] items-center justify-center rounded-t-sm border border-b-0 border-[#c6c9ce] bg-[#fcfcfc]"
        >
          {treeTabIcon}
        </button>
        <button
          aria-label="文件夹浏览器"
          className="flex w-[30px] items-center justify-center border-t border-r border-[#c6c9ce] bg-[#edeff2]"
        >
          {foldersIcon}
        </button>
        <button
          aria-label="收藏夹"
          className="flex w-[30px] items-center justify-center rounded-tr-sm border-t border-r border-[#c6c9ce] bg-[#edeff2]"
        >
          {favoritesIcon}
        </button>
      </div>
      <div className="flex flex-1 flex-col border border-r-3 border-[#c6c9ce]">
        <div className="flex h-[29px] items-center border-b border-[#c6c9ce] pl-5">
          <h2 className="text-[13px] font-bold">模型树</h2>
          <button aria-label="设置" className="ml-[14px] flex items-center gap-2">
            {hammerIcon}
            <Caret />
          </button>
          <button aria-label="显示" className="ml-[10px] flex items-center gap-2">
            {treeListIcon}
            <Caret />
          </button>
          <button aria-label="隐藏" disabled className="ml-3">
            {treeHideIcon}
          </button>
        </div>
        <ul className="pt-[6px] font-['Liberation_Mono','Noto_Sans_CJK_SC',monospace]">
          <li className="flex h-[18px] items-center gap-[5px] pl-[11px] text-[10px]">
            {partIcon}
            PRT0008.PRT
          </li>
          {treeItems.map((item) => (
            <li key={item.label} className="flex h-[18px] items-center pl-4">
              <span className="w-[14px]">
                {item.open && (
                  <Svg w={8} h={10}>
                    <path d="M.5 .5v9l7-4.500z" fill="#85898e" />
                  </Svg>
                )}
              </span>
              <span className="flex w-5 items-center justify-start">{item.icon}</span>
              {item.spark && sparkIcon}
              <span className={`whitespace-nowrap ${item.cjk ? "text-xs" : "text-[10px]"}`}>
                {item.label}
              </span>
            </li>
          ))}
        </ul>
      </div>
    </aside>
  );
}

function Model() {
  return (
    <svg
      viewBox="194 160 1161 666"
      preserveAspectRatio="xMinYMin meet"
      className="absolute inset-0 h-full w-full"
      fill="none"
      role="img"
      aria-label="PRT0008"
    >
      {/* cam body */}
      <path
        d="M672.300 361.600L1012 431.100A105 105 0 0 1 1012 636.900L672.300 706.400A176 176 0 1 1 672.300 361.600z"
        transform="translate(0 .5)"
        fill="#848e94"
        stroke="#0a97cf"
        shapeRendering="crispEdges"
      />

      {/* datum planes */}
      <path d="M457.500 354.500h642v360h-642z" stroke="#99642f" />
      <path d="M458 535.500h641" stroke="#787d82" />
      <path d="M458 533.500h641" stroke="#8a6a4a" />
      <path d="M636.500 355v359" stroke="#7f8082" />
      <path d="M638 355v359" stroke="#99642f" strokeWidth="2" />
      <path d="M610 534h57" stroke="#99642f" strokeWidth="2" />

      {/* sketch references */}
      <path d="M195 372.500h1160M637.500 160v666" stroke="#2be0e0" strokeDasharray="8 8" />
      <path d="M634 369l7 7M641 369l-7 7" stroke="#e59a2c" />
      <path d="M636 371h3v3h-3z" fill="#0a97cf" />

      <text
        x="646"
        y="528"
        fontSize="12"
        fontFamily="Liberation Mono, monospace"
        fill="#99642f"
      >
        PRT_CSYS_DEF
      </text>

      {/* spin centre */}
      <path d="M778.500 534v-19" stroke="#2cf52c" />
      <circle cx="778.500" cy="514.500" r="2" fill="#2cf52c" />
      <path d="M779 534h19" stroke="#ff3030" strokeWidth="2" />
      <circle cx="798.500" cy="534.500" r="2" fill="#f03a3a" />
      <circle cx="778.500" cy="534.500" r="3" fill="#2cf5ff" />

      {/* selection box */}
      <path d="M421.500 260.500h467v239h-467z" stroke="#fb3a3a" strokeWidth="3" />
    </svg>
  );
}

function Watermark() {
  return (
    <div className="absolute right-[9px] bottom-2 flex items-end">
      <svg width="58" height="56" viewBox="0 0 58 56" fill="none" aria-hidden="true">
        <path
          fillRule="evenodd"
          d="M31 34C12 33 0 20 1 8 2-3 19-1 30 9c9 8 13 18 10 25-1-7-5-16-14-23C17 4 7 2 5 9c-2 8 9 21 26 25z"
          fill="#b9c5d1"
        />
        <path
          d="M27 29c-10-1-18 3-17 9 1 5 8 8 16 8-10 2-18-1-18-8 0-6 9-11 19-9z"
          fill="#c6ced7"
          stroke="#c6ced7"
        />
        <path
          d="M38 22c8-8 18-6 19 4 1 13-11 28-22 29-5 0-7-3-8-7 3 4 7 5 12 2 9-4 15-15 15-23 0-8-8-10-16-5z"
          fill="#f0abb0"
        />
      </svg>
      <div className="-ml-px flex flex-col">
        <span className="mb-1 pl-[11px] font-['Noto_Sans_CJK_SC',sans-serif] text-[30px] leading-8 font-bold text-[#a4dfb9]">
          野火论坛
        </span>
        <a
          href="#"
          className="font-['Noto_Sans',sans-serif] text-[15px] leading-5 text-[#cde9e4]"
        >
          www.proewildfire.cn
        </a>
      </div>
    </div>
  );
}

export default function App() {
  return (
    <div className="flex min-h-screen flex-col overflow-hidden bg-[#fcfcfc] font-['Liberation_Sans','Noto_Sans_CJK_SC',sans-serif]">
      <TitleBar />
      <TabBar />
      <Ribbon />
      <div className="flex flex-1 pl-1">
        <ModelTree />
        <main className="relative flex-1">
          <Model />
          <div
            role="toolbar"
            className="absolute top-[7px] left-[452px] flex h-7 border border-[#c6c9ce] bg-[#edeff2] px-1"
          >
            {viewButtons.map((b) => (
              <button
                key={b.label}
                aria-label={b.label}
                className={`flex items-center justify-center border-l border-[#c6c9ce] last:w-7 last:border-r ${
                  b.menu ? "w-7" : "w-[27px]"
                } ${b.on ? "bg-[#dcdee2] inset-ring inset-ring-[#b0b3b8]" : "bg-[#fcfcfc]"}`}
              >
                {b.icon}
              </button>
            ))}
          </div>
          <Watermark />
        </main>
      </div>
    </div>
  );
}
